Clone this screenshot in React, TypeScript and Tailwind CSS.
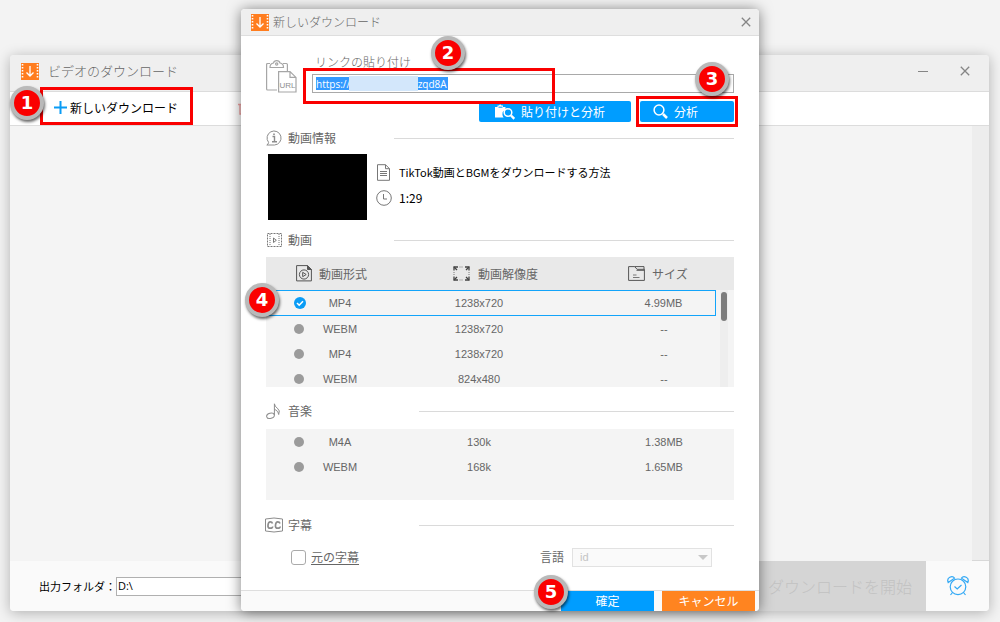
import React, { useState } from 'react';

interface Format {
  id: string;
  type: string;
  quality: string;
  size: string;
}

const videoFormats: Format[] = [
  { id: 'v1', type: 'MP4', quality: '1238x720', size: '4.99MB' },
  { id: 'v2', type: 'WEBM', quality: '1238x720', size: '--' },
  { id: 'v3', type: 'MP4', quality: '1238x720', size: '--' },
  { id: 'v4', type: 'WEBM', quality: '824x480', size: '--' },
];

const audioFormats: Format[] = [
  { id: 'a1', type: 'M4A', quality: '130k', size: '1.38MB' },
  { id: 'a2', type: 'WEBM', quality: '168k', size: '1.65MB' },
];

const FilmLogo = () => (
  <svg width="18" height="17" viewBox="0 0 18 17" className="shrink-0">
    <rect width="18" height="17" fill="#ff7d1f" />
    <path d="M1.500 1v15M16.500 1v15" stroke="#fff" strokeWidth="1.600" strokeDasharray="1.600 1.400" />
    <path d="M9 3v10M5.500 9.500 9 13l3.500-3.500" fill="none" stroke="#fff" strokeWidth="1.300" />
  </svg>
);

const CloseIcon = () => (
  <svg width="10" height="10" viewBox="0 0 10 10" stroke="#858585" strokeWidth="1.300">
    <path d="M.8.8l8.400 8.400M9.200.8.8 9.200" />
  </svg>
);

const ClipboardUrlIcon = () => (
  <svg width="31" height="33" viewBox="0 0 31 33" fill="none" stroke="#a6a6a6" strokeWidth="1.200">
    <path d="M4 3.500H1.600Q.6 3.500.6 4.500V29q0 1 1 1H11M17 3.500h3.400q1 0 1 1V11" />
    <path d="M4 7.500q0-4 3.500-4.500Q8 .6 10.700.6T14 3q3.500.5 3.500 4.500z" />
    <circle cx="10.700" cy="4" r="1.100" />
    <path d="M12.600 11.600h11.400l6 5.800V32H12.600zM24 11.600v5.800h6" fill="#fff" />
    <text x="13.500" y="27.500" fontFamily="Liberation Sans" fontSize="8" fill="#8e8e8e" stroke="none">URL</text>
  </svg>
);

const PasteSearchIcon = () => (
  <svg width="20" height="16" viewBox="0 0 20 16">
    <path d="M0 3h2.500V1.500H4Q5.200-.6 6.500 1.500H8V3h2.500v2.500Q7 7.500 7.500 11q.3 1.700 1.200 2.500H0z" fill="#fff" />
    <circle cx="13" cy="8.500" r="3.800" fill="none" stroke="#fff" strokeWidth="1.500" />
    <path d="m16 11.500 3.300 3.300" stroke="#fff" strokeWidth="2.400" />
    <path d="M3.500 3.200h4" stroke="#009dff" strokeWidth="1" />
  </svg>
);

const SearchIcon = () => (
  <svg width="15" height="15" viewBox="0 0 15 15" fill="none" stroke="#fff">
    <circle cx="6" cy="6" r="4.900" strokeWidth="1.500" />
    <path d="m10 10 4 4" strokeWidth="2.500" />
  </svg>
);

const InfoIcon = () => (
  <svg width="16" height="16" viewBox="0 0 16 16" fill="none" stroke="#8c8c8c">
    <path d="M2.600 12.400A7 7 0 1 1 8.500 15H.8q1.600-.8 1.800-2.600z" />
    <path d="M6.500 6.500h2v5M6 11.700h5" strokeWidth="1.400" />
    <path d="M7.200 4.200h1.600" strokeWidth="1.600" />
  </svg>
);

const FilmIcon = () => (
  <svg width="15" height="14" viewBox="0 0 15 14" fill="none" stroke="#777">
    <path d="M.5.5h14v13H.5z" strokeDasharray="2 1" />
    <path d="M3 1v12M12 1v12" strokeDasharray="1 1" />
    <path d="M6.500 5v4.500l2.800-2.200z" />
  </svg>
);

const MusicIcon = () => (
  <svg width="16" height="17" viewBox="0 0 16 17" fill="none" stroke="#8c8c8c">
    <ellipse cx="4.500" cy="12.800" rx="3.900" ry="2.600" transform="rotate(-15 4.500 12.800)" />
    <path d="M8.400 12V.8q.5 3 3 4.400 3.200 2.300 1.300 6.300.3-3-4.300-5.500" />
  </svg>
);

const CcIcon = () => (
  <svg width="18" height="16" viewBox="0 0 18 16" fill="none" stroke="#8c8c8c" className="shrink-0">
    <path d="M.5 2Q9 0 17.500 2v12Q9 16 .5 14z" />
    <path d="M7.500 6.500Q7 4.800 5.200 4.800T3 8t2.200 3.200T7.500 9.500M15 6.500q-.5-1.700-2.300-1.700T10.500 8t2.200 3.200T15 9.500" strokeWidth="1.700" />
  </svg>
);

const DocIcon = () => (
  <svg width="16" height="17" viewBox="0 0 16 17" fill="none" stroke="#777">
    <path d="M1.500.7h8l4 4v11.600h-12zM9.500.7v4h4" />
    <path d="M4 7.500h7M4 9.500h7M4 11.500h7" />
  </svg>
);

const ClockIcon = () => (
  <svg width="16" height="16" viewBox="0 0 16 16" fill="none" stroke="#777">
    <circle cx="8" cy="8" r="7.300" />
    <path d="M7.500 4v5H11" />
  </svg>
);

const FormatIcon = () => (
  <svg width="16" height="17" viewBox="0 0 16 17" fill="none" stroke="#555" className="shrink-0">
    <path d="M.6 15.900V.6h10.900l3.900 3.900v11.400z" />
    <path d="M11.500.6v3.900h3.900z" fill="#555" />
    <circle cx="8" cy="9.500" r="4.600" />
    <path d="M6.700 7.300v4.400l3.500-2.200z" />
  </svg>
);

const ResolutionIcon = () => (
  <svg width="17" height="15" viewBox="0 0 17 15" fill="none" stroke="#444">
    <path d="M1 4.500V1h4M12 1h4v3.500M16 10.500V14h-4M5 14H1v-3.500" strokeWidth="1.300" />
    <path d="m1 1 3 3M16 1l-3 3M16 14l-3-3M1 14l3-3" strokeWidth="1.300" />
    <path d="M6.500 1h4M6.500 14h4M1 6v3M16 6v3" strokeDasharray="1 1" stroke="#777" />
  </svg>
);

const FolderIcon = () => (
  <svg width="17" height="15" viewBox="0 0 17 15" fill="none" stroke="#555">
    <path d="M.6 14.400V.6h6l2.500 2.700h7.300v11.100z" />
    <path d="M6.600.6H16v3M8.500 4.300h7.900" />
    <path d="M5 9h3.500M5 11.500h6.500" stroke="#777" />
  </svg>
);

const AlarmIcon = () => (
  <svg width="22" height="20" viewBox="0 0 22 20" fill="none" stroke="#33a9f5" strokeWidth="1.200">
    <circle cx="11" cy="10.800" r="7.800" />
    <path d="m7.500 10.500 2.700 2.500L14.500 9" />
    <path d="M1.200 6.500Q-.3 2.800 2.800 1.300T7.500 2.200zM20.800 6.500q1.500-3.700-1.600-5.200t-4.700.9z" />
    <path d="m5.500 16.500-2 2.500M16.500 16.500l2 2.500" />
  </svg>
);

const TrashIcon = () => (
  <svg width="12" height="13" viewBox="0 0 12 13" fill="none" stroke="#f3a3a3" strokeWidth="1.400">
    <path d="M0 2.500h12M2 2.500V12h8V2.500M4 .8h4" />
  </svg>
);

// Numbered step marker, positioned by the caller
const Step: React.FC<{ n: number; className: string }> = ({ n, className }) => (
  <span
    className={`absolute z-20 flex size-[34px] items-center justify-center rounded-full border-4 border-[#b9b9b9] bg-[#fa0000] font-['DejaVu_Sans'] text-[18px] font-bold leading-none text-white shadow-[1px_2px_3px_rgba(0,0,0,0.6)] ${className}`}
  >
    {n}
  </span>
);

const SectionTitle: React.FC<{ icon: React.ReactNode; title: string; wide?: boolean }> = ({ icon, title, wide }) => (
  <div className="flex h-5 items-center">
    <div className={wide ? 'flex w-[128px] shrink-0 items-center gap-1.5' : 'flex w-[153px] shrink-0 items-center gap-1.5'}>
      <span className="flex w-4 shrink-0 justify-center">{icon}</span>
      <h2>{title}</h2>
    </div>
    <div className="h-px flex-1 bg-[#dadada]" />
  </div>
);

const FormatCols = () => (
  <colgroup>
    <col className="w-[53px]" />
    <col className="w-[42px]" />
    <col />
    <col className="w-[104px]" />
    <col className="w-[18px]" />
  </colgroup>
);

const FormatRow: React.FC<{ format: Format; selected: boolean; onSelect: (id: string) => void }> = ({
  format,
  selected,
  onSelect,
}) => {
  const edge = selected ? 'border-y border-[#12a4fa]' : '';
  return (
    <tr className={selected ? 'h-[26px]' : 'h-[25px]'}>
      <td className={`pl-[27px] ${edge} ${selected ? 'border-l' : ''}`}>
        <span className="relative flex size-3 items-center justify-center">
          <input
            type="radio"
            name="format"
            aria-label={`${format.type} ${format.quality}`}
            checked={selected}
            onChange={() => onSelect(format.id)}
            className="size-[10px] appearance-none rounded-full bg-[#9b9b9b] checked:size-3 checked:bg-[#0a9cf5]"
          />
          {selected && (
            <svg className="pointer-events-none absolute inset-0" viewBox="0 0 12 12" fill="none" stroke="#fff" strokeWidth="1.600">
              <path d="m3 6 2.200 2.200L9 4.300" />
            </svg>
          )}
        </span>
      </td>
      <td className={`text-center ${edge}`}>{format.type}</td>
      <td className={`pr-[15px] text-center ${edge}`}>{format.quality}</td>
      <td className={`text-center ${edge} ${selected ? 'border-r' : ''}`}>{format.size}</td>
      <td />
    </tr>
  );
};

const App: React.FC = () => {
  const [selected, setSelected] = useState('v1');
  const [url, setUrl] = useState('https://' + '\u00a0'.repeat(26) + 'zqd8A');
  const [folder, setFolder] = useState('D:\\');

  return (
    <div className="relative flex min-h-screen flex-col bg-[#f3f3f3] pt-[55px] pr-[11px] pb-[11px] pl-[10px] font-['Noto_Sans_CJK_JP',sans-serif] text-[12px] leading-5 text-[#666]">
      {/* Main window */}
      <main className="flex flex-1 flex-col rounded bg-[#f4f4f4] shadow-[0_2px_14px_rgba(0,0,0,0.28)]">
        <header className="flex h-[36px] items-center rounded-t bg-[#efefef] pr-[19px] pb-1 pl-[11px]">
          <FilmLogo />
          <h1 className="ml-[9px] flex-1 text-[13px] font-light">ビデオのダウンロード</h1>
          <button aria-label="最小化" className="mr-8 flex size-[10px] items-center">
            <span className="h-px w-full bg-[#858585]" />
          </button>
          <button aria-label="閉じる">
            <CloseIcon />
          </button>
        </header>

        <div className="flex h-[35px] items-center border-y border-[#dcdcdc] bg-white">
          <div className="relative flex h-full w-[228px] items-center pb-0.5 pl-[44px]">
            <button className="flex items-center gap-[3px] text-black">
              <svg width="13" height="13" viewBox="0 0 13 13" stroke="#0a9cf5" strokeWidth="2">
                <path d="M6.500 0v13M0 6.500h13" />
              </svg>
              新しいダウンロード
            </button>
            <span className="pointer-events-none absolute -top-[5px] left-[30px] h-[38px] w-[153px] border-3 border-[#fa0000]" />
            <Step n={1} className="-top-1.5 left-0" />
          </div>
          <button aria-label="削除">
            <TrashIcon />
          </button>
        </div>

        <div className="flex flex-1 justify-end">
          <div className="w-[17px] border-b border-[#d8d8d8] bg-[#ededed]" />
        </div>

        <footer className="flex h-[50px] items-stretch rounded-b bg-[#fafafa]">
          <div className="flex flex-1 items-center pl-[29px] text-[11px] text-black">
            <label htmlFor="folder">出力フォルダ：</label>
            <input
              id="folder"
              value={folder}
              onChange={(e) => setFolder(e.target.value)}
              className="h-[19px] w-[400px] border border-[#b0b0b0] bg-white px-px font-['Open_Sans']"
            />
          </div>
          <button disabled className="w-[172px] bg-[#d5d5d5] text-[16px] font-light text-[#c2c2c2]">
            ダウンロードを開始
          </button>
          <button aria-label="スケジュール" className="flex w-[63px] items-center justify-center">
            <AlarmIcon />
          </button>
        </footer>
      </main>

      {/* New download dialog */}
      <section
        role="dialog"
        aria-label="新しいダウンロード"
        className="absolute inset-x-0 top-[9px] z-10 mx-auto w-[518px] rounded bg-white shadow-[0_1px_14px_rgba(0,0,0,0.5)]"
      >
        <header className="flex h-[27px] items-center rounded-t border-b border-[#dedede] bg-[#efefef] pr-[8px] pl-[10px]">
          <FilmLogo />
          <span className="ml-1 flex-1 font-light">新しいダウンロード</span>
          <button aria-label="閉じる">
            <CloseIcon />
          </button>
        </header>

        <div className="px-[25px] pt-4">
          <div className="flex items-end gap-[15px]">
            <ClipboardUrlIcon />
            <div className="relative flex-1">
              <label htmlFor="url" className="block pl-[3px] font-light">
                リンクの貼り付け
              </label>
              <div className="relative mt-0.5 flex h-[19px] items-center border border-[#a9a9a9] bg-white">
                <span className="absolute left-[3px] h-[13px] w-[132px] bg-[#3399ff]" />
                <input
                  id="url"
                  value={url}
                  onChange={(e) => setUrl(e.target.value)}
                  className="relative h-full w-full bg-transparent px-[3px] font-['Open_Sans'] text-[10px] text-white outline-none"
                />
                <span className="absolute left-9 h-[15px] w-[69px] bg-[#d3e7fb]" />
              </div>
              <span className="pointer-events-none absolute top-4 -left-[9px] h-[36px] w-[252px] border-3 border-[#fa0000]" />
              <Step n={2} className="-top-4 left-[119px]" />
            </div>
          </div>

          <div className="mt-2 flex justify-end gap-[9px]">
            <button className="flex h-[21px] w-[152px] items-center rounded-[2px] bg-[#009dff] pl-4 text-white">
              <PasteSearchIcon />
              <span className="ml-1.5">貼り付けと分析</span>
            </button>
            <div className="relative">
              <button className="flex h-[21px] w-[94px] items-center gap-1.5 rounded-[2px] bg-[#009dff] pl-[13px] text-white">
                <SearchIcon />
                分析
              </button>
              <span className="pointer-events-none absolute -inset-x-1 -top-[5px] h-[31px] border-3 border-[#fa0000]" />
              <Step n={3} className="-top-[39px] left-[55px]" />
            </div>
          </div>

          <div className="mt-1.5">
            <SectionTitle icon={<InfoIcon />} title="動画情報" wide />
          </div>
          <div className="mt-1.5 flex h-[66px] pl-0.5">
            <div className="w-[99px] bg-black" />
            <div className="ml-[9px] flex flex-col gap-1.5 pt-2 text-black">
              <div className="flex items-center gap-[7px] text-[11px]">
                <DocIcon />
                TikTok動画とBGMをダウンロードする方法
              </div>
              <div className="flex items-center gap-[7px]">
                <ClockIcon />
                1:29
              </div>
            </div>
          </div>

          <div className="mt-2.5">
            <SectionTitle icon={<FilmIcon />} title="動画" wide />
          </div>
          <div className="relative mt-[7px] h-[130px] bg-[#f4f4f4]">
            <div className="h-full overflow-hidden">
              <table className="w-full table-fixed border-separate border-spacing-0 font-['Liberation_Sans'] text-[11px]">
                <FormatCols />
                <thead className="bg-[#e9e9e9] font-['Noto_Sans_CJK_JP'] text-[12px]">
                  <tr className="h-[33px]">
                    <th colSpan={2} className="pl-[30px] font-normal">
                      <span className="flex items-center gap-[7px] whitespace-nowrap">
                        <FormatIcon />
                        動画形式
                      </span>
                    </th>
                    <th className="pl-[92px] font-normal">
                      <span className="flex items-center gap-2">
                        <ResolutionIcon />
                        動画解像度
                      </span>
                    </th>
                    <th className="pl-4 font-normal">
                      <span className="flex items-center gap-[7px]">
                        <FolderIcon />
                        サイズ
                      </span>
                    </th>
                    <td />
                  </tr>
                </thead>
                <tbody>
                  {videoFormats.map((f) => (
                    <FormatRow key={f.id} format={f} selected={selected === f.id} onSelect={setSelected} />
                  ))}
                </tbody>
              </table>
            </div>
            <div className="absolute right-[6px] top-[33px] bottom-0 w-2 bg-[#eeeeee] pt-0.5">
              <div className="mx-auto h-[29px] w-1.5 rounded-full bg-[#7d7d7d]" />
            </div>
            <Step n={4} className="top-[26px] -left-[21px]" />
          </div>

          <div className="mt-[14px]">
            <SectionTitle icon={<MusicIcon />} title="音楽" />
          </div>
          <div className="mt-2 h-[71px] bg-[#f4f4f4]">
            <table className="w-full table-fixed border-separate border-spacing-0 font-['Liberation_Sans'] text-[11px]">
              <FormatCols />
              <tbody>
                {audioFormats.map((f) => (
                  <FormatRow key={f.id} format={f} selected={selected === f.id} onSelect={setSelected} />
                ))}
              </tbody>
            </table>
          </div>

          <div className="mt-[15px]">
            <SectionTitle icon={<CcIcon />} title="字幕" />
          </div>
          <div className="mt-3 flex h-5 items-center pr-[22px] pl-[25px]">
            <input
              id="subtitle"
              type="checkbox"
              className="size-[15px] appearance-none rounded-[3px] border border-[#aaa] bg-white checked:bg-[#0a9cf5]"
            />
            <label htmlFor="subtitle" className="ml-[5px] flex-1 underline underline-offset-2">
              元の字幕
            </label>
            <label htmlFor="language">言語</label>
            <div className="relative ml-2">
              <select
                id="language"
                disabled
                className="block h-[19px] w-[140px] appearance-none border border-[#e2e2e2] bg-[#fafafa] pl-[7px] font-['Liberation_Sans'] text-[11px] leading-4 text-[#c4c4c4] opacity-100"
              >
                <option>id</option>
              </select>
              <svg width="10" height="5" viewBox="0 0 10 5" fill="#c8c8c8" className="pointer-events-none absolute top-[7px] right-1">
                <path d="M0 0h10L5 5z" />
              </svg>
            </div>
          </div>
        </div>

        <footer className="relative mt-[23px] flex h-[21px] justify-end gap-2 rounded-b border-t border-[#dedede] bg-[#fafafa] pr-1">
          <button className="w-[93px] bg-[#009dff] text-white">確定</button>
          <button className="w-[93px] bg-[#ff8420] text-white">キャンセル</button>
          <Step n={5} className="-top-4 right-[191px]" />
        </footer>
      </section>
    </div>
  );
};

export default App;
